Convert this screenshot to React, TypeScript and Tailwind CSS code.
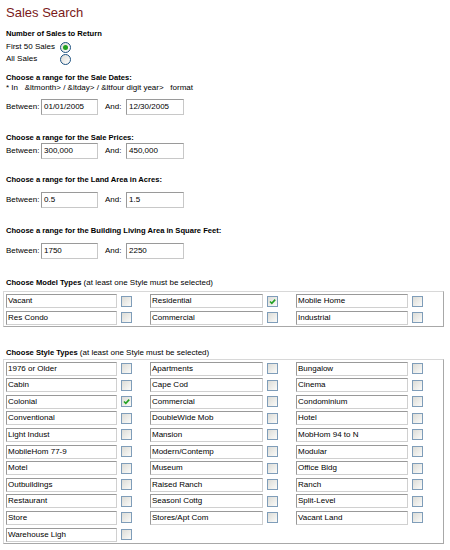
import React from 'react';

const modelTypes: [string, boolean][] = [
  ['Vacant', false],
  ['Residential', true],
  ['Mobile Home', false],
  ['Res Condo', false],
  ['Commercial', false],
  ['Industrial', false],
];

const styleTypes: [string, boolean][] = [
  ['1976 or Older', false],
  ['Apartments', false],
  ['Bungalow', false],
  ['Cabin', false],
  ['Cape Cod', false],
  ['Cinema', false],
  ['Colonial', true],
  ['Commercial', false],
  ['Condominium', false],
  ['Conventional', false],
  ['DoubleWide Mob', false],
  ['Hotel', false],
  ['Light Indust', false],
  ['Mansion', false],
  ['MobHom 94 to N', false],
  ['MobileHom 77-9', false],
  ['Modern/Contemp', false],
  ['Modular', false],
  ['Motel', false],
  ['Museum', false],
  ['Office Bldg', false],
  ['Outbuildings', false],
  ['Raised Ranch', false],
  ['Ranch', false],
  ['Restaurant', false],
  ['Seasonl Cottg', false],
  ['Split-Level', false],
  ['Store', false],
  ['Stores/Apt Com', false],
  ['Vacant Land', false],
  ['Warehouse Ligh', false],
];

function Check({ checked }: { checked: boolean }) {
  return (
    <span className="block w-[11px] h-[11px] border border-[#7f9db9] bg-gradient-to-br from-[#dcdcd7] to-[#fbfbf9] relative">
      {checked && (
        <svg viewBox="0 0 9 9" className="absolute left-[0px] top-[0px] w-[9px] h-[9px]">
          <path d="M2 4.5 L3.8 6.3 L7.2 2.6" fill="none" stroke="#21a121" strokeWidth="1.6" />
        </svg>
      )}
    </span>
  );
}

function Radio({ checked }: { checked: boolean }) {
  return (
    <span className="flex items-center justify-center w-[11px] h-[11px] rounded-full border border-[#1c5180] bg-gradient-to-br from-[#dcdcd7] to-white">
      {checked && <span className="block w-[5px] h-[5px] rounded-full bg-[#21a121]" />}
    </span>
  );
}

function Field({ value, w }: { value: string; w: string }) {
  return (
    <span className={`${w} h-[16px] border border-t-[#9a9a9a] border-l-[#9a9a9a] border-b-[#c8c8c8] border-r-[#c8c8c8] pl-[2px] leading-[14px] block`}>
      {value}
    </span>
  );
}

function RangeRow({ from, to, className }: { from: string; to: string; className: string }) {
  return (
    <div className={`flex items-center h-[16px] pl-[3px] ${className}`}>
      <span className="w-[35px]">Between:</span>
      <Field value={from} w="w-[57px]" />
      <span className="ml-[7px] w-[21px]">And:</span>
      <Field value={to} w="w-[58px]" />
    </div>
  );
}

function Cell({ label, checked, w }: { label: string; checked: boolean; w: string }) {
  return (
    <div className="flex items-center">
      <span className={`${w} h-[14px] border border-t-[#999] border-l-[#999] border-b-[#d0d0d0] border-r-[#d0d0d0] pl-[1px] leading-[12px] block whitespace-nowrap overflow-hidden`}>
        {label}
      </span>
      <span className="ml-[4px]">
        <Check checked={checked} />
      </span>
    </div>
  );
}

function TypeTable({ items }: { items: [string, boolean][] }) {
  return (
    <div className="w-[441px] border border-t-[#d8d8d8] border-l-[#d8d8d8] border-b-[#a8a8a8] border-r-[#a8a8a8] pt-[2px] pb-[1px] pl-[2px] grid grid-cols-[144px_146px_130px] gap-y-[2.6px]">
      {items.map(([label, checked], i) => (
        <Cell
          key={label + i}
          label={label}
          checked={checked}
          w={i % 3 === 0 ? 'w-[111px]' : i % 3 === 1 ? 'w-[113px]' : 'w-[112px]'}
        />
      ))}
    </div>
  );
}

export default function App() {
  return (
    <div className="w-[450px] h-[550px] bg-white overflow-hidden pl-[3px] text-[8px] text-black font-['Liberation_Sans',Arial,sans-serif]">
      <h1 className="mt-[5px] pl-[3px] h-[16px] leading-[16px] text-[13px] text-[#7a1a1a]">Sales Search</h1>

      <div className="mt-[7px] pl-[3px] h-[12px] leading-[12px] font-bold text-[7.6px]">Number of Sales to Return</div>
      <div className="mt-[1px] pl-[3px] h-[12px] flex items-center">
        <span className="w-[54px]">First 50 Sales</span>
        <Radio checked={true} />
      </div>
      <div className="pl-[3px] h-[12px] flex items-center">
        <span className="w-[54px]">All Sales</span>
        <Radio checked={false} />
      </div>

      <div className="mt-[8px] pl-[3px] leading-[10px] font-bold text-[7.6px]">Choose a range for the Sale Dates:</div>
      <div className="pl-[3px] leading-[10px] whitespace-pre">{'* In   &ltmonth> / &ltday> / &ltfour digit year>   format'}</div>
      <RangeRow from="01/01/2005" to="12/30/2005" className="mt-[6px]" />

      <div className="mt-[18px] pl-[3px] leading-[10px] font-bold text-[7.6px]">Choose a range for the Sale Prices:</div>
      <RangeRow from="300,000" to="450,000" className="mt-0" />

      <div className="mt-[16px] pl-[3px] leading-[10px] font-bold text-[7.6px]">Choose a range for the Land Area in Acres:</div>
      <RangeRow from="0.5" to="1.5" className="mt-[7px]" />

      <div className="mt-[18px] pl-[3px] leading-[10px] font-bold text-[7.6px]">Choose a range for the Building Living Area in Square Feet:</div>
      <RangeRow from="1750" to="2250" className="mt-[7px]" />

      <div className="mt-[19px] pl-[3px] leading-[10px]">
        <span className="font-bold text-[7.6px]">Choose Model Types</span> (at least one Style must be selected)
      </div>
      <div className="mt-[3px]">
        <TypeTable items={modelTypes} />
      </div>

      <div className="mt-[21px] pl-[3px] leading-[10px]">
        <span className="font-bold text-[7.6px]">Choose Style Types</span> (at least one Style must be selected)
      </div>
      <div className="mt-[1px]">
        <TypeTable items={styleTypes} />
      </div>
    </div>
  );
}
